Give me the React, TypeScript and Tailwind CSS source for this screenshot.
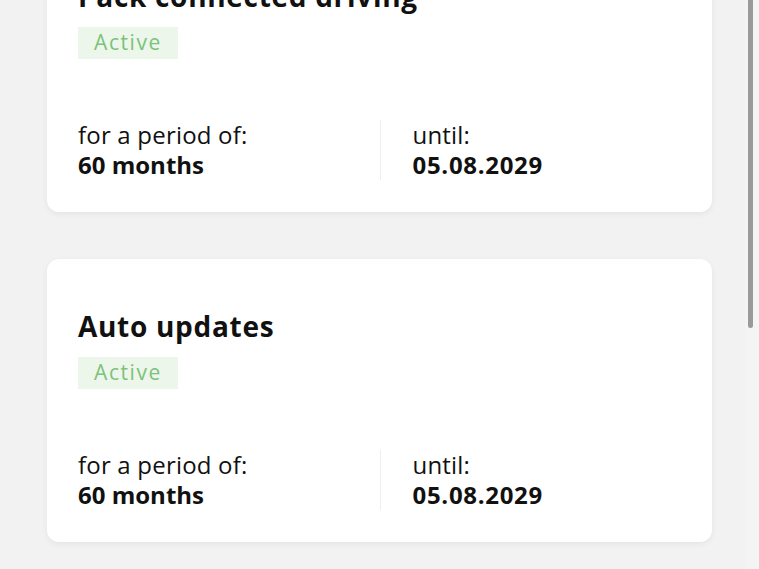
import React from "react";

type Service = {
  title: string;
  status: string;
  period: string;
  until: string;
};

const services: Service[] = [
  { title: "Pack connected driving", status: "Active", period: "60 months", until: "05.08.2029" },
  { title: "Auto updates", status: "Active", period: "60 months", until: "05.08.2029" },
];

function ServiceCard({ service }: { service: Service }) {
  return (
    <div className="bg-white rounded-[12px] shadow-[0_2px_6px_rgba(0,0,0,0.06)] pt-[49px] pb-[32px] px-[31px]">
      <h2 className="text-[28px] leading-[36px] font-bold text-[#111] tracking-[0.7px]">{service.title}</h2>
      <div className="mt-[13px] inline-flex h-[32px] items-center px-[16px] bg-[#edf6ea] text-[#7cc27a] text-[21px] tracking-[1.6px]">
        {service.status}
      </div>
      <div className="mt-[61px] grid grid-cols-2">
        <div className="text-[#111] text-[24px] leading-[30px]">
          <div className="tracking-[0.2px]">for a period of:</div>
          <div className="font-bold">{service.period}</div>
        </div>
        <div className="border-l border-[#eeeeee] pl-[32px] text-[#111] text-[24px] leading-[30px]">
          <div className="tracking-[0.2px]">until:</div>
          <div className="font-bold tracking-[0.7px]">{service.until}</div>
        </div>
      </div>
    </div>
  );
}

export default function App() {
  return (
    <div className="relative h-[569px] w-[759px] overflow-hidden bg-[#f2f2f2]" style={{ fontFamily: "'Open Sans', sans-serif" }}>
      <div className="-mt-[71px] px-[47px] flex flex-col gap-[47px]">
        {services.map((s) => (
          <ServiceCard key={s.title} service={s} />
        ))}
      </div>
      <div className="absolute top-0 right-0 h-full w-[14px] bg-[#f4f4f4]">
        <div className="ml-[3px] w-[5px] h-[328px] rounded-b-full bg-[#9a9a9a]" />
      </div>
    </div>
  );
}
